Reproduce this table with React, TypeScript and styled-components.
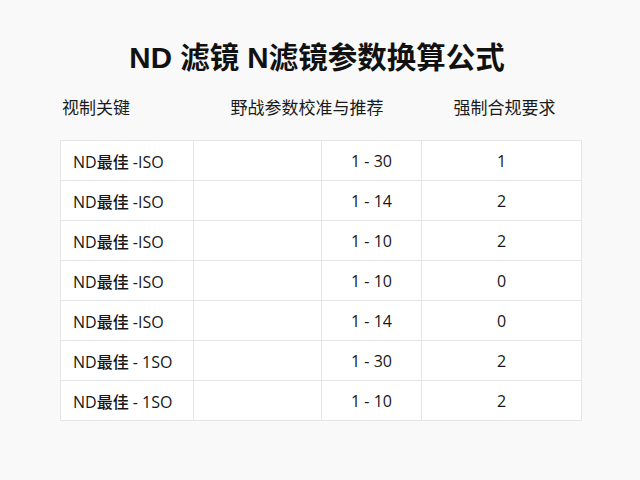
import styled, { createGlobalStyle } from "styled-components";

const GlobalStyle = createGlobalStyle`
  html, body {
    margin: 0;
    padding: 0;
    background: #f9f9f9;
  }
  body {
    font-family: "Open Sans", "Noto Sans CJK SC", sans-serif;
    color: #1c1c1c;
  }
`;

const COLUMNS = "133px 128px 100px 159px";

const rows = [
  { name: "ND最佳 -ISO", range: "1 - 30", level: "1" },
  { name: "ND最佳 -ISO", range: "1 - 14", level: "2" },
  { name: "ND最佳 -ISO", range: "1 - 10", level: "2" },
  { name: "ND最佳 -ISO", range: "1 - 10", level: "0" },
  { name: "ND最佳 -ISO", range: "1 - 14", level: "0" },
  { name: "ND最佳 - 1SO", range: "1 - 30", level: "2" },
  { name: "ND最佳 - 1SO", range: "1 - 10", level: "2" },
];

const App = () => {
  return (
    <>
      <GlobalStyle />
      <Page>
        <Title>ND 滤镜 N滤镜参数换算公式</Title>

        <HeaderRow>
          <HeaderLabel align="left">视制关键</HeaderLabel>
          <HeaderLabel align="center" span={2}>
            野战参数校准与推荐
          </HeaderLabel>
          <HeaderLabel align="center">强制合规要求</HeaderLabel>
        </HeaderRow>

        <Table>
          {rows.map((row, i) => (
            <Row key={i}>
              <Cell align="left">{row.name}</Cell>
              <Cell />
              <Cell>{row.range}</Cell>
              <Cell last>{row.level}</Cell>
            </Row>
          ))}
        </Table>
      </Page>
    </>
  );
};

const Page = styled.div`
  width: 640px;
  height: 480px;
  box-sizing: border-box;
  padding: 40px 60px 0;
  display: flex;
  flex-direction: column;
`;

const Title = styled.h1`
  margin: 0;
  height: 36px;
  line-height: 36px;
  text-align: center;
  font-family: "Liberation Sans", "Noto Sans CJK SC", sans-serif;
  font-size: 29.5px;
  font-weight: bold;
  color: #111;
  padding-right: 6px;
  white-space: nowrap;
`;

const HeaderRow = styled.div`
  margin-top: 10px;
  height: 40px;
  display: grid;
  grid-template-columns: ${COLUMNS};
  align-items: center;
`;

const HeaderLabel = styled.div<{ align: "left" | "center"; span?: number }>`
  grid-column: span ${(p) => p.span ?? 1};
  text-align: ${(p) => p.align};
  padding-left: ${(p) => (p.align === "left" ? "2px" : "0")};
  font-family: "Noto Sans CJK SC", sans-serif;
  font-size: 17px;
  color: #1a1a1a;
  white-space: nowrap;

  &:last-child {
    padding-left: 8px;
  }
`;

const Table = styled.div`
  margin-top: 14px;
  width: 520px;
  background: #fff;
  border: 1px solid #e4e6e9;
  border-bottom: none;
`;

const Row = styled.div`
  display: grid;
  grid-template-columns: ${COLUMNS};
  height: 40px;
  box-sizing: border-box;
  border-bottom: 1px solid #e2e4e7;
`;

const Cell = styled.div<{ align?: "left" | "center"; last?: boolean }>`
  display: flex;
  align-items: center;
  justify-content: ${(p) => (p.align === "left" ? "flex-start" : "center")};
  padding-left: ${(p) => (p.align === "left" ? "12px" : "0")};
  border-right: ${(p) => (p.last ? "none" : "1px solid #e4e6e9")};
  font-size: 16px;
  font-weight: 500;
  color: #161616;
  white-space: nowrap;
`;

export default App;
